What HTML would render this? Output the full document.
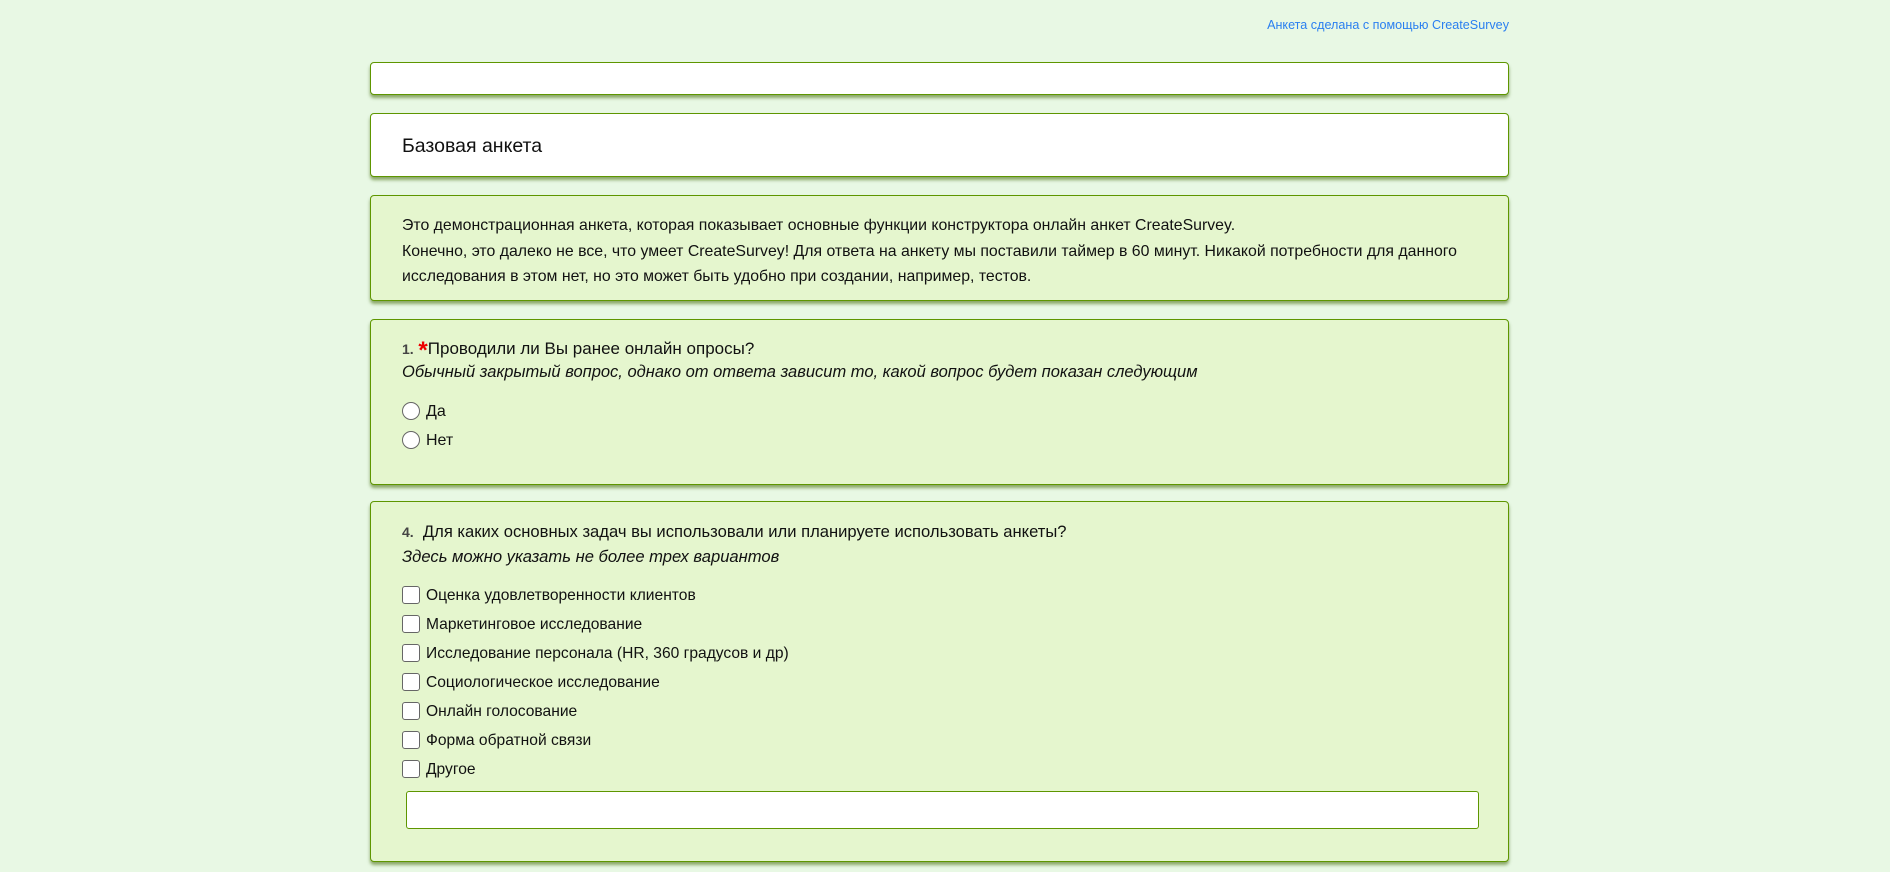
<!DOCTYPE html>
<html><head><meta charset="utf-8"><style>
*{box-sizing:border-box}
body{margin:0;width:1890px;height:872px;overflow:hidden;background:#e8f8e4;font-family:"Liberation Sans","DejaVu Sans",sans-serif;color:#111}
.link{position:absolute;right:381px;top:18px;font-size:12.6px;color:#2a7ff0}
.box{position:absolute;left:370px;width:1139px;border:1px solid #5e9600;border-radius:4px;box-shadow:0 3px 3px rgba(60,100,0,.55)}
.w{background:#fff}
.g{background:#e5f6ce}
.t{position:absolute;left:31px;font-size:15.6px;white-space:nowrap}
.radio{display:inline-block;width:18px;height:18px;border:1px solid #666;border-radius:50%;background:#fff;vertical-align:-4px;margin-right:6px}
.cb{display:inline-block;width:18px;height:18px;border:1px solid #666;border-radius:3px;background:#fff;vertical-align:-4px;margin-right:6px}
.num{font-weight:bold;color:#444;font-size:14px}
.star{color:#e00;font-size:24px;font-weight:bold;vertical-align:-4px}
</style></head><body>
<div class="link">Анкета сделана с помощью CreateSurvey</div>
<div class="box w" style="top:62px;height:33px"></div>
<div class="box w" style="top:113px;height:64px"><div class="t" style="top:21px;font-size:19.5px">Базовая анкета</div></div>
<div class="box g" style="top:195px;height:106px">
<div class="t" style="top:17px;font-size:15.85px;line-height:25.5px">Это демонстрационная анкета, которая показывает основные функции конструктора онлайн анкет CreateSurvey.<br>Конечно, это далеко не все, что умеет CreateSurvey! Для ответа на анкету мы поставили таймер в 60 минут. Никакой потребности для данного<br>исследования в этом нет, но это может быть удобно при создании, например, тестов.</div>
</div>
<div class="box g" style="top:319px;height:166px">
<div class="t" style="top:17px;font-size:17px"><span class="num">1.</span> <span class="star">*</span>Проводили ли Вы ранее онлайн опросы?</div>
<div class="t" style="top:43px;font-size:16.5px;font-style:italic">Обычный закрытый вопрос, однако от ответа зависит то, какой вопрос будет показан следующим</div>
<div class="t" style="top:82px;font-size:16px"><span class="radio"></span>Да</div>
<div class="t" style="top:111px;font-size:16px"><span class="radio"></span>Нет</div>
</div>
<div class="box g" style="top:501px;height:361px">
<div class="t" style="top:20px;font-size:16.6px"><span class="num">4.</span>&nbsp; Для каких основных задач вы использовали или планируете использовать анкеты?</div>
<div class="t" style="top:45px;font-size:16.6px;font-style:italic">Здесь можно указать не более трех вариантов</div>
<div class="t" style="top:84px"><span class="cb"></span>Оценка удовлетворенности клиентов</div>
<div class="t" style="top:113px"><span class="cb"></span>Маркетинговое исследование</div>
<div class="t" style="top:142px"><span class="cb"></span>Исследование персонала (HR, 360 градусов и др)</div>
<div class="t" style="top:171px"><span class="cb"></span>Социологическое исследование</div>
<div class="t" style="top:200px"><span class="cb"></span>Онлайн голосование</div>
<div class="t" style="top:229px"><span class="cb"></span>Форма обратной связи</div>
<div class="t" style="top:258px"><span class="cb"></span>Другое</div>
<div style="position:absolute;left:35px;top:289px;width:1073px;height:38px;background:#fff;border:1px solid #5e9600;border-radius:3px"></div>
</div>
</body></html>
